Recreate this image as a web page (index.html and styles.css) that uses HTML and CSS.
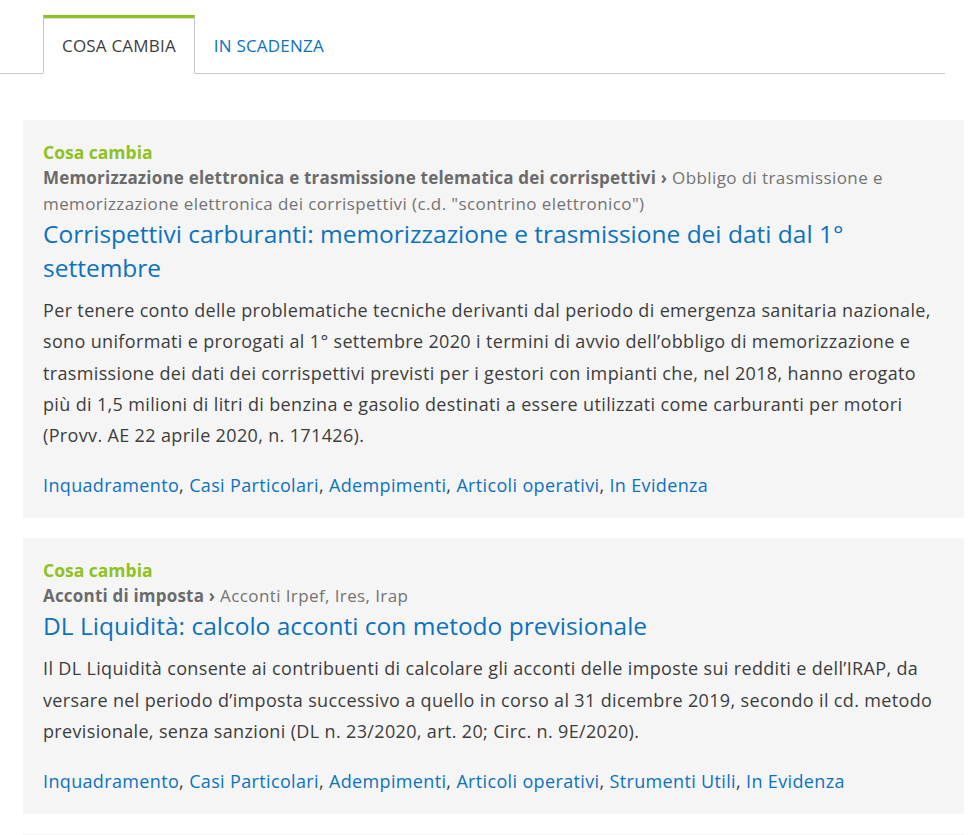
FILE: index.html
```html
<!DOCTYPE html>
<html lang="it">
<head>
    <meta charset="UTF-8">
    <meta name="viewport" content="width=device-width, initial-scale=1.0">
    <title>Cosa cambia</title>
    <link rel="stylesheet" href="styles.css">
</head>
<body>
    <!-- Schede -->
    <ul class="tabs">
        <li class="tab active"><a href="#">COSA CAMBIA</a></li>
        <li class="tab"><a href="#">IN SCADENZA</a></li>
    </ul>

    <div class="news-list">
        <div class="news-item">
            <div class="news-type">Cosa cambia</div>
            <div class="news-path"><b>Memorizzazione elettronica e trasmissione telematica dei corrispettivi ›</b> Obbligo di trasmissione e memorizzazione elettronica dei corrispettivi (c.d. "scontrino elettronico")</div>
            <a class="news-title" href="#">Corrispettivi carburanti: memorizzazione e trasmissione dei dati dal 1° settembre</a>
            <p class="news-text">Per tenere conto delle problematiche tecniche derivanti dal periodo di emergenza sanitaria nazionale, sono uniformati e prorogati al 1° settembre 2020 i termini di avvio dell’obbligo di memorizzazione e trasmissione dei dati dei corrispettivi previsti per i gestori con impianti che, nel 2018, hanno erogato più di 1,5 milioni di litri di benzina e gasolio destinati a essere utilizzati come carburanti per motori (Provv. AE 22 aprile 2020, n. 171426).</p>
            <div class="news-tags">
                <a href="#">Inquadramento</a>, <a href="#">Casi Particolari</a>, <a href="#">Adempimenti</a>, <a href="#">Articoli operativi</a>, <a href="#">In Evidenza</a>
            </div>
        </div>

        <div class="news-item">
            <div class="news-type">Cosa cambia</div>
            <div class="news-path"><b>Acconti di imposta ›</b> Acconti Irpef, Ires, Irap</div>
            <a class="news-title" href="#">DL Liquidità: calcolo acconti con metodo previsionale</a>
            <p class="news-text">Il DL Liquidità consente ai contribuenti di calcolare gli acconti delle imposte sui redditi e dell’IRAP, da versare nel periodo d’imposta successivo a quello in corso al 31 dicembre 2019, secondo il cd. metodo previsionale, senza sanzioni (DL n. 23/2020, art. 20; Circ. n. 9E/2020).</p>
            <div class="news-tags">
                <a href="#">Inquadramento</a>, <a href="#">Casi Particolari</a>, <a href="#">Adempimenti</a>, <a href="#">Articoli operativi</a>, <a href="#">Strumenti Utili</a>, <a href="#">In Evidenza</a>
            </div>
        </div>

        <div class="news-item"></div>
    </div>
</body>
</html>
```

FILE: styles.css
```css
body {
    margin: 0;
    font-family: "Open Sans", Arial, sans-serif;
    color: #3d3d3d;
    background-color: #fff;
}

a {
    color: #0c72bf;
    text-decoration: none;
}

.tabs {
    display: flex;
    list-style: none;
    margin: 15px 31px 0 0;
    padding: 0 0 0 43px;
    border-bottom: 1px solid #c8c8c8;
}

.tab {
    margin-bottom: -1px;
}

.tab a {
    display: block;
    height: 55px;
    padding: 0 18px;
    line-height: 56px;
    font-size: 17px;
    letter-spacing: 0.2px;
    border: 1px solid transparent;
    border-top: 3px solid transparent;
}

.tab.active a {
    color: #3d3d3d;
    background-color: #fff;
    border-color: #c8c8c8;
    border-top-color: #8dc21f;
    border-bottom-color: #fff;
    box-shadow: inset 0 1px 0 #dcdcdc;
}

.news-list {
    display: flex;
    flex-direction: column;
    gap: 20px;
    padding: 46px 12px 0 23px;
}

.news-item {
    background-color: #f5f5f5;
    padding: 20px 20px 20px 20px;
}

.news-type {
    color: #8dc21f;
    font-weight: bold;
    font-size: 17.5px;
    line-height: 25px;
}

.news-path {
    color: #737373;
    font-size: 17px;
    letter-spacing: 0.4px;
    line-height: 26px;
}

.news-path b {
    color: #6b6b6b;
    letter-spacing: 0.2px;
}

.news-title {
    display: block;
    font-size: 24.5px;
    line-height: 34px;
    margin-bottom: 10px;
}

.news-text {
    margin: 0 0 21px 0;
    font-size: 18px;
    letter-spacing: 0.35px;
    line-height: 31.25px;
}

.news-tags {
    font-size: 18px;
    letter-spacing: 0.35px;
    line-height: 26px;
}
```
